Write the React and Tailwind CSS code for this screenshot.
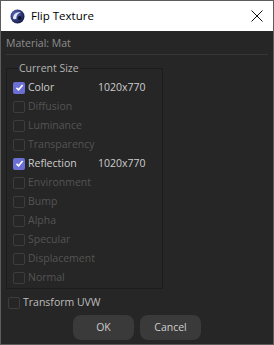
import { useState } from "react";

const channels = [
  { name: "Color", on: true, size: "1020x770" },
  { name: "Diffusion" },
  { name: "Luminance" },
  { name: "Transparency" },
  { name: "Reflection", on: true, size: "1020x770" },
  { name: "Environment" },
  { name: "Bump" },
  { name: "Alpha" },
  { name: "Specular" },
  { name: "Displacement" },
  { name: "Normal" },
];

const Box = ({ checked }) =>
  checked ? (
    <span className="flex h-[12px] w-[12px] shrink-0 items-center justify-center rounded-[2px] bg-[#6b6fd3]">
      <svg width="9" height="9" viewBox="0 0 9 9">
        <path d="M1.5 4.8 L3.6 6.8 L7.6 2" fill="none" stroke="#fff" strokeWidth="1.6" />
      </svg>
    </span>
  ) : (
    <span className="h-[12px] w-[12px] shrink-0 rounded-[2px] border border-[#3d3d3d]" />
  );

const Logo = () => (
  <svg width="15" height="15" viewBox="0 0 15 15">
    <defs>
      <radialGradient id="c4d" cx="0.35" cy="0.35" r="0.7">
        <stop offset="0" stopColor="#5a6bc0" />
        <stop offset="1" stopColor="#141a44" />
      </radialGradient>
    </defs>
    <circle cx="7.5" cy="7.5" r="7" fill="url(#c4d)" />
    <path d="M3 9.5 C3 5 7 2.5 11 3.5 C8 4 6 6.5 6.5 9.5 C5 10.5 3.8 10.5 3 9.5 Z" fill="#e6e8f5" />
    <circle cx="9.5" cy="9" r="2" fill="#0e1230" />
  </svg>
);

export default function App() {
  const [rows, setRows] = useState(channels);
  const [uvw, setUvw] = useState(false);

  const toggle = (i) => {
    setRows((prev) => prev.map((r, j) => (j === i && r.size ? { ...r, on: !r.on } : r)));
  };

  return (
    <div
      className="flex h-[345px] w-[274px] flex-col border border-[#5c5c5c] bg-[#262626] text-[10.5px]"
      style={{ fontFamily: '"Open Sans", "Noto Sans", sans-serif' }}
    >
      <div className="flex h-[30px] items-center bg-white">
        <span className="ml-[9px] mr-[6px] flex">
          <Logo />
        </span>
        <span className="text-[11.5px] text-black">Flip Texture</span>
        <svg className="ml-auto mr-[10px]" width="12" height="12" viewBox="0 0 12 12">
          <path d="M0.5 0.5 L11.5 11.5 M11.5 0.5 L0.5 11.5" stroke="#111" strokeWidth="1" />
        </svg>
      </div>

      <div className="flex flex-1 flex-col">
        <div className="mt-[4px] px-[5px] leading-[16px] text-[#8e8e8e]">Material: Mat</div>
        <div className="mx-[5px] mt-[3px] h-px bg-[#363636]" />

        <fieldset className="mx-[5px] mt-[6px] w-[157px] border border-[#1c1c1c] px-[6px] pb-[1px] pt-[3px]">
          <legend className="ml-[5px] px-[1px] leading-[14px] text-[#b4b4b4]">Current Size</legend>
          {rows.map((r, i) => (
            <div
              key={r.name}
              onClick={() => toggle(i)}
              className="flex h-[19px] items-center"
            >
              <Box checked={r.on} />
              <span className={"ml-[3px] w-[70px] " + (r.size ? "text-[#cdcdcd]" : "text-[#545454]")}>
                {r.name}
              </span>
              {r.on && <span className="text-[#cdcdcd]">{r.size}</span>}
            </div>
          ))}
        </fieldset>

        <div
          className="ml-[7px] mt-[4px] flex h-[19px] items-center"
          onClick={() => setUvw(!uvw)}
        >
          <Box checked={uvw} />
          <span className="ml-[3px] text-[#bdbdbd]">Transform UVW</span>
        </div>

        <div className="mt-[3px] flex justify-center gap-[6px]">
          <button className="h-[25px] w-[61px] rounded-[8px] bg-[#3a3a3a] text-[#cdcdcd]">OK</button>
          <button className="h-[25px] w-[61px] rounded-[8px] bg-[#3a3a3a] text-[#cdcdcd]">Cancel</button>
        </div>
      </div>
    </div>
  );
}
